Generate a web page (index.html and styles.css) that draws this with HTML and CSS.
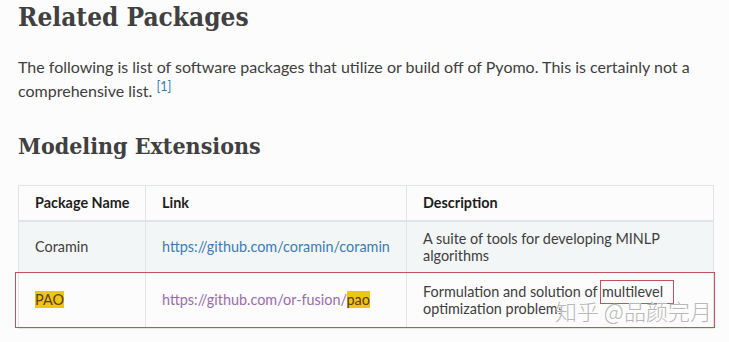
FILE: index.html
```html
<!DOCTYPE html>
<html>
<head>
<meta charset="utf-8">
<link rel="stylesheet" href="styles.css">
</head>
<body>
<div class="doc">
  <h1 class="title">Related Packages</h1>
  <p class="intro">The following is list of software packages that utilize or build off of Pyomo. This is certainly not a comprehensive list. <sup class="ref">[1]</sup></p>
  <h2 class="subtitle">Modeling Extensions</h2>
  <div class="table-wrap">
    <table class="pkg">
      <colgroup>
        <col class="c1"><col class="c2"><col class="c3">
      </colgroup>
      <thead>
        <tr><th>Package Name</th><th>Link</th><th>Description</th></tr>
      </thead>
      <tbody>
        <tr class="odd">
          <td>Coramin</td>
          <td><span class="link">https://github.com/coramin/coramin</span></td>
          <td>A suite of tools for developing MINLP algorithms</td>
        </tr>
        <tr class="even">
          <td><span class="hl">PAO</span></td>
          <td><span class="link visited">https://github.com/or-fusion/<span class="hl">pao</span></span></td>
          <td>Formulation and solution of <span class="mark">multilevel</span> optimization problems</td>
        </tr>
      </tbody>
    </table>
    <div class="row-box"></div>
    <div class="watermark">知乎 @品颜完月</div>
  </div>
</div>
</body>
</html>
```
FILE: styles.css
```css
html, body {
  margin: 0;
  padding: 0;
  background: #fcfcfc;
  overflow: hidden;
}
.doc {
  padding: 0 16px 0 18px;
  font-family: Lato, "Noto Sans", sans-serif;
  color: #404040;
  font-size: 16px;
  line-height: 24px;
}
.title {
  font-family: "DejaVu Serif", serif;
  font-stretch: condensed;
  font-weight: 700;
  font-size: 26px;
  line-height: 32px;
  margin: 1px 0 0 0;
  color: #404040;
}
.intro {
  margin: 22px 0 0 0;
}
.ref {
  color: #2980b9;
  font-size: 12.5px;
  line-height: 0;
}
.subtitle {
  font-family: "DejaVu Serif", serif;
  font-stretch: condensed;
  font-weight: 700;
  font-size: 23px;
  line-height: 30px;
  margin: 28px 0 0 0;
  color: #404040;
}
.table-wrap {
  position: relative;
  margin-top: 24px;
  width: 695px;
}
.pkg {
  width: 695px;
  table-layout: fixed;
  border-collapse: collapse;
  border: 1px solid #e1e4e5;
  font-size: 14.4px;
  line-height: 17.5px;
}
.c1 { width: 127px; }
.c2 { width: 261px; }
.c3 { width: 307px; }
.pkg th {
  text-align: left;
  font-weight: 700;
  padding: 8px 16px;
  white-space: nowrap;
  border-left: 1px solid #e1e4e5;
  border-bottom: 2px solid #e1e4e5;
  color: #1e1e1e;
}
.pkg td {
  padding: 8px 16px;
  border-left: 1px solid #e1e4e5;
  vertical-align: middle;
}
.pkg tr.odd td {
  background: #f3f6f6;
}
.pkg tr.even td {
  padding-top: 10px;
  padding-bottom: 10px;
}
.link {
  color: #3a7db5;
}
.link.visited {
  color: #9b6bb0;
}
.hl {
  background: #f1c40f;
  color: #5a3d1a;
}
.mark {
  outline: 1px solid #c8505c;
  padding: 2px 10px 3px 1px;
}
.row-box {
  position: absolute;
  left: -3px;
  top: 87px;
  width: 700px;
  height: 56px;
  box-sizing: border-box;
  border: 1.5px solid #c8505c;
  pointer-events: none;
}
.watermark {
  position: absolute;
  left: 537px;
  top: 112px;
  font-family: "Noto Sans CJK SC", sans-serif;
  font-weight: 300;
  font-size: 22px;
  line-height: 26px;
  color: #b8b8b8;
  text-shadow: 0 0 1px #ffffff, 1px 1px 0 #ffffff;
  white-space: nowrap;
}
```
